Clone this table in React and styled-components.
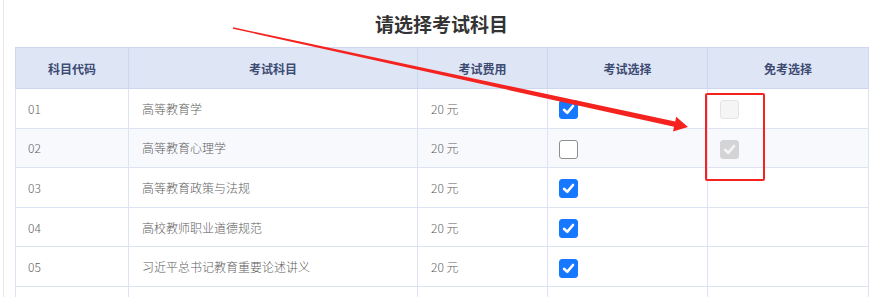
import React from "react";
import styled, { createGlobalStyle } from "styled-components";

const GlobalStyle = createGlobalStyle`
  html, body {
    margin: 0;
    padding: 0;
    background: #fff;
  }
  body {
    width: 873px;
    height: 297px;
    overflow: hidden;
    font-family: "Noto Sans CJK SC", "Noto Sans", sans-serif;
  }
`;

const subjects = [
  { code: "01", name: "高等教育学", fee: "20 元", exam: true, exempt: "empty" },
  { code: "02", name: "高等教育心理学", fee: "20 元", exam: false, exempt: "checked" },
  { code: "03", name: "高等教育政策与法规", fee: "20 元", exam: true },
  { code: "04", name: "高校教师职业道德规范", fee: "20 元", exam: true },
  { code: "05", name: "习近平总书记教育重要论述讲义", fee: "20 元", exam: true },
  { code: "", name: "", fee: "" },
];

const Page = styled.div`
  position: relative;
  height: 297px;
  padding-left: 3px;
  box-sizing: border-box;
  overflow: hidden;
`;

const Card = styled.div`
  height: 100%;
  border-left: 1px solid #e6e7ea;
  padding: 10px 0 0 11px;
  box-sizing: border-box;
`;

const Title = styled.h2`
  margin: 0 0 10px;
  width: 853px;
  text-align: center;
  font-size: 19px;
  line-height: 27px;
  font-weight: 700;
  color: #333;
`;

const Table = styled.table`
  width: 853px;
  border-collapse: collapse;
  table-layout: fixed;
`;

const Th = styled.th`
  height: 40px;
  padding: 0;
  background: #dee6f6;
  border: 1px solid #cdd7ef;
  color: #3d4a72;
  font-size: 12px;
  font-weight: 700;
  text-align: center;
`;

const Row = styled.tr`
  background: ${(p) => (p.$striped ? "#f8f9fd" : "#fff")};
`;

const Td = styled.td`
  height: 38.6px;
  padding: 0 0 0 ${(p) => p.$pad || 12}px;
  border: 1px solid #dde3f3;
  color: #5e5e5e;
  font-size: 12px;
  font-weight: 300;
  vertical-align: middle;
`;

const Box = styled.span`
  display: flex;
  align-items: center;
  justify-content: center;
  width: 19px;
  height: 19px;
  margin-top: 3px;
  box-sizing: border-box;
  border-radius: 3px;
  background: ${(p) =>
    p.$disabled ? (p.$checked ? "#d4d4d6" : "#f5f5f5") : p.$checked ? "#1677ff" : "#fff"};
  border: 1px solid
    ${(p) =>
      p.$disabled ? (p.$checked ? "#d4d4d6" : "#e4e4e4") : p.$checked ? "#1677ff" : "#8e8e8e"};
`;

const Check = ({ checked, disabled }) => (
  <Box $checked={checked} $disabled={disabled}>
    {checked && (
      <svg width="13" height="13" viewBox="0 0 13 13">
        <path
          d="M2 6.8 L5.2 9.8 L11 3"
          fill="none"
          stroke={disabled ? "#f4f4f4" : "#fff"}
          strokeWidth="2.6"
          strokeLinecap="round"
          strokeLinejoin="round"
        />
      </svg>
    )}
  </Box>
);

const Overlay = styled.svg`
  position: absolute;
  left: 0;
  top: 0;
  pointer-events: none;
`;

const RedFrame = styled.div`
  position: absolute;
  left: 705px;
  top: 93px;
  width: 60px;
  height: 88px;
  box-sizing: border-box;
  border: 2px solid #f5231f;
  border-radius: 2px;
`;

export default function App() {
  return (
    <>
      <GlobalStyle />
      <Page>
        <Card>
          <Title>请选择考试科目</Title>
          <Table>
            <colgroup>
              <col style={{ width: 113 }} />
              <col style={{ width: 289 }} />
              <col style={{ width: 130 }} />
              <col style={{ width: 160 }} />
              <col style={{ width: 161 }} />
            </colgroup>
            <thead>
              <tr>
                <Th>科目代码</Th>
                <Th>考试科目</Th>
                <Th>考试费用</Th>
                <Th>考试选择</Th>
                <Th>免考选择</Th>
              </tr>
            </thead>
            <tbody>
              {subjects.map((s, i) => (
                <Row key={i} $striped={i === 1}>
                  <Td $pad={12}>{s.code}</Td>
                  <Td $pad={13}>{s.name}</Td>
                  <Td $pad={13}>{s.fee}</Td>
                  <Td $pad={11}>{s.code && <Check checked={s.exam} />}</Td>
                  <Td $pad={12}>
                    {s.exempt && <Check checked={s.exempt === "checked"} disabled />}
                  </Td>
                </Row>
              ))}
            </tbody>
          </Table>
        </Card>
        <RedFrame />
        <Overlay width="873" height="297">
          <polygon
            points="233.15,27.3 675.2,121.4 676.2,116.8 688,127 673,131.4 674,126.8 232.85,28.7"
            fill="#f5231f"
          />
        </Overlay>
      </Page>
    </>
  );
}
